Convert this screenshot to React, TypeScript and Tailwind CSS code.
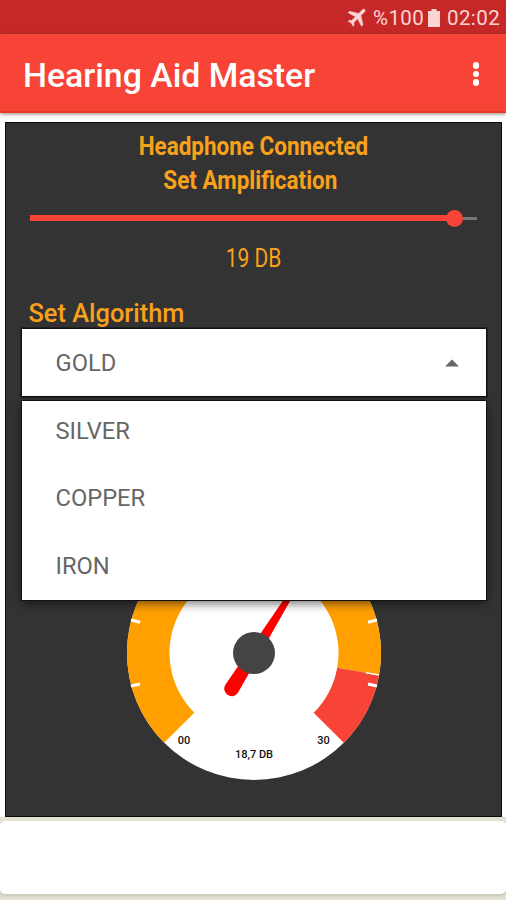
import React, { useState } from 'react';

const ALGORITHMS = ['SILVER', 'COPPER', 'IRON'];

function StatusBar() {
  return (
    <div className="h-[34px] bg-[#c62828] flex items-center justify-end pr-[6px] pt-[2px] text-[#fbd5d3] text-[20.5px] leading-none">
      <svg
        className="w-[24px] h-[24px] mr-[3px] mb-[2px]"
        viewBox="0 0 24 24"
        fill="currentColor"
        stroke="currentColor"
        strokeWidth="0.5"
      >
        <g transform="rotate(45 12 12)">
          <path d="M21 16v-2l-8-5V3.5a1.5 1.5 0 0 0-3 0V9l-8 5v2l8-2.5V19l-2 1.5V22l3.5-1 3.5 1v-1.5L13 19v-5.5z" />
        </g>
      </svg>
      <span className="w-[55px] whitespace-nowrap tracking-[0.4px] font-[450]">%100</span>
      <svg className="w-[12px] h-[18px] mr-[7px]" viewBox="0 0 12 18" fill="currentColor">
        <path d="M3.5 0h5v2H12v16H0V2h3.5z" />
      </svg>
      <span className="w-[53px] whitespace-nowrap tracking-[0.4px] font-[450]">02:02</span>
    </div>
  );
}

function AppBar() {
  return (
    <header className="relative h-[79px] bg-[#f84436] border-b-2 border-[#ea3826] shadow-[0_1px_4px_rgba(70,50,20,0.6)] flex items-center justify-between pt-[3px] pl-[23px] pr-[27px]">
      <h1 className="text-white text-[33.8px] font-medium leading-none whitespace-nowrap pt-[3px]">Hearing Aid Master</h1>
      <button className="flex flex-col gap-[2px]" aria-label="Menu">
        <span className="size-[6.5px] rounded-full bg-white" />
        <span className="size-[6.5px] rounded-full bg-white" />
        <span className="size-[6.5px] rounded-full bg-white" />
      </button>
    </header>
  );
}

function Slider() {
  return (
    <div className="h-[18px] ml-[25px] mr-[25px] flex items-center">
      <div className="w-[417px] h-[6px] bg-[#f84436]" />
      <div className="size-[17px] rounded-full bg-[#f84436] shrink-0 -ml-px" />
      <div className="flex-1 h-[3px] bg-[#777]" />
    </div>
  );
}

function Gauge() {
  return (
    <svg className="w-[256px] h-[256px] mx-auto block" viewBox="-128 -128 256 256">
      <circle r="127" fill="#fff" />
      <path d="M-89.8 89.8A127 127 0 1 1 125.1 22L83.2 14.7A84.5 84.5 0 1 0 -59.7 59.7z" fill="#ffa000" />
      <path d="M125.1 22A127 127 0 0 1 89.8 89.8L59.7 59.7A84.5 84.5 0 0 0 83.2 14.7z" fill="#f84436" />
      <path
        d="M-123 -33l9 2.3M-123 33l9 -2M123 -33l-9 2.3M123 33l-9 -2"
        stroke="#fff"
        strokeWidth="3"
      />
      <path d="M112 19.8l13 2.2" stroke="#fff" strokeWidth="1.4" />
      <g transform="rotate(32)">
        <path d="M-7.5 42L-1 -112h2L7.5 42A7.5 7.5 0 0 1 -7.5 42z" fill="#f00" />
      </g>
      <circle r="21" fill="#444" />
      <g fontSize="11" fontWeight="500" fill="#111" textAnchor="middle">
        <text x="-70" y="90.5">00</text>
        <text x="69.5" y="90.5">30</text>
        <text x="0" y="105">18,7 DB</text>
      </g>
    </svg>
  );
}

export default function App() {
  const [selected, setSelected] = useState('GOLD');

  return (
    <div className="w-[506px] h-[900px] overflow-hidden bg-white flex flex-col font-['Roboto',sans-serif]">
      <StatusBar />
      <AppBar />
      <main className="mt-[9px] ml-[5px] mr-[4px] h-[695px] shrink-0 bg-[#333] border border-[#0c0c0c] text-[#f9a11b] flex flex-col">
        <div className="pt-[7px] text-center text-[25px] leading-[34px] font-bold">
          <div className="scale-x-[0.898]">Headphone Connected</div>
          <div className="scale-x-[0.898] pr-[7px]">Set Amplification</div>
        </div>
        <div className="mt-[11px] -mx-px">
          <Slider />
        </div>
        <div className="mt-[17px] h-[29px] text-center text-[25px] leading-[30px] scale-x-[0.84]">19 DB</div>
        <div className="mt-[25px] ml-[22.5px] h-[30px] text-[25.4px] leading-[30px] font-medium">Set Algorithm</div>
        <div className="relative ml-[16px] mt-px w-[464px] h-[67px] bg-white shadow-[0_0_0_1.5px_#111] text-[#666] text-[23.7px] font-[450]">
          <div className="h-[68px] pt-[2px] pl-[33.5px] pr-[27px] flex items-center justify-between">
            <span>{selected}</span>
            <svg className="w-[14px] h-[8px] mb-[3px]" viewBox="0 0 14 8" fill="#666">
              <path d="M0 7.5L7 0.5L14 7.5z" />
            </svg>
          </div>
          <ul className="absolute left-0 top-[72px] w-full h-[199px] bg-white shadow-[0_0_0_1px_#111,0_3px_10px_rgba(0,0,0,0.6)]">
            {ALGORITHMS.map((name) => (
              <li
                key={name}
                onClick={() => setSelected(name)}
                className="h-[67.4px] -translate-y-[3px] pl-[33.5px] flex items-center cursor-pointer"
              >
                {name}
              </li>
            ))}
          </ul>
        </div>
        <div className="mt-[129px]">
          <Gauge />
        </div>
      </main>
      <footer className="flex-1 bg-[#e3e0d4] pt-[4px]">
        <div className="h-[73px] bg-white rounded-[5px] shadow-[0_2px_3px_#c9c4b6]" />
      </footer>
    </div>
  );
}
